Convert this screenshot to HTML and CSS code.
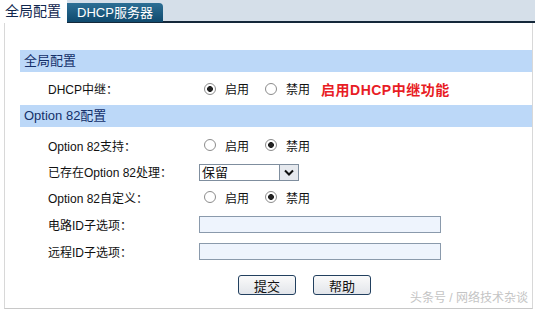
FILE: index.html
```html
<!DOCTYPE html>
<html lang="zh-CN">
<head>
    <meta charset="UTF-8" />
    <title>DHCP中继</title>
    <link rel="stylesheet" href="styles.css">
</head>
<body>
    <div class="tabs">
        <div class="tab active">全局配置</div>
        <div class="tab">DHCP服务器</div>
        <div class="tab-rest"></div>
    </div>

    <div class="panel">
        <div class="band">全局配置</div>
        <div class="row first">
            <span class="label">DHCP中继：</span>
            <div class="ctrl">
                <label class="opt"><input type="radio" name="relay" checked> 启用</label>
                <label class="opt"><input type="radio" name="relay"> 禁用</label>
                <span class="hint">启用DHCP中继功能</span>
            </div>
        </div>

        <div class="band">Option 82配置</div>
        <div class="rows">
            <div class="row">
                <span class="label">Option 82支持：</span>
                <div class="ctrl">
                    <label class="opt"><input type="radio" name="o82"> 启用</label>
                    <label class="opt"><input type="radio" name="o82" checked> 禁用</label>
                </div>
            </div>
            <div class="row">
                <span class="label">已存在Option 82处理：</span>
                <div class="ctrl">
                    <div class="select">
                        <span class="select-val">保留</span>
                        <span class="select-btn">
                            <svg width="10" height="7" viewBox="0 0 10 7"><path d="M1 1.5 L5 5.5 L9 1.5" fill="none" stroke="#111" stroke-width="2"/></svg>
                        </span>
                    </div>
                </div>
            </div>
            <div class="row">
                <span class="label">Option 82自定义：</span>
                <div class="ctrl">
                    <label class="opt"><input type="radio" name="custom"> 启用</label>
                    <label class="opt"><input type="radio" name="custom" checked> 禁用</label>
                </div>
            </div>
            <div class="row tall">
                <span class="label">电路ID子选项：</span>
                <div class="ctrl"><input type="text" class="text"></div>
            </div>
            <div class="row">
                <span class="label">远程ID子选项：</span>
                <div class="ctrl"><input type="text" class="text"></div>
            </div>
        </div>

        <div class="actions">
            <button type="button">提交</button>
            <button type="button">帮助</button>
        </div>
        <div class="mark">头条号 / 网络技术杂谈</div>
    </div>
</body>
</html>
```

FILE: styles.css
```css
body {
    margin: 0;
    width: 535px;
    height: 309px;
    overflow: hidden;
    background: #fff;
    font-family: "Liberation Sans", "Noto Sans CJK SC", sans-serif;
    font-size: 12px;
    color: #111;
}
.tabs {
    display: flex;
    height: 23px;
    background: #d5dfe9;
}
.tab {
    margin-top: 3px;
    width: 96px;
    height: 19px;
    line-height: 19px;
    text-align: center;
    color: #fff;
    font-size: 13px;
    background: linear-gradient(#2d6f95, #0f4a6e);
    border-radius: 0 4px 0 0;
    border-bottom: 1px solid #14283a;
}
.tab.active {
    margin-top: 0;
    width: 66px;
    height: 23px;
    line-height: 22px;
    color: #10264e;
    font-size: 14px;
    background: #fff;
    border: none;
    border-radius: 0;
    padding-right: 1px;
}
.tab-rest {
    flex: 1;
    border-bottom: 2px solid #14283a;
    height: 21px;
}
.panel {
    position: relative;
    box-sizing: border-box;
    height: 286px;
    margin: 0 2px 0 4px;
    border-left: 1px solid #d8d8d8;
    border-right: 1px solid #d8d8d8;
    border-bottom: 1px solid #c8c8c8;
    padding: 27px 0 0 15px;
}
.band {
    height: 22px;
    line-height: 22px;
    background: #bcd8f8;
    color: #14306a;
    font-size: 13px;
    padding-left: 4px;
}
.row {
    display: flex;
    align-items: center;
    height: 26px;
}
.row.first {
    height: 33px;
}
.row.tall {
    height: 28px;
}
.rows {
    padding-top: 5px;
}
.label {
    width: 151px;
    padding-left: 28px;
}
.ctrl {
    display: flex;
    align-items: center;
}
.opt {
    display: flex;
    align-items: center;
    margin-right: 11px;
}
.opt input {
    appearance: none;
    width: 12px;
    height: 12px;
    margin: 0 9px 0 5px;
    border: 1px solid #8c8c8c;
    border-radius: 50%;
    background: #fff;
}
.opt input:checked {
    background: radial-gradient(circle, #222 0 2.6px, #fff 3.2px);
}
.hint {
    color: #e81c24;
    font-size: 14px;
    font-weight: bold;
    letter-spacing: 0.5px;
}
.select {
    display: flex;
    width: 98px;
    height: 15px;
    border: 1px solid #7f8e9e;
    margin-top: 2px;
}
.select-val {
    flex: 1;
    font-size: 13px;
    line-height: 15px;
    padding-left: 2px;
}
.select-btn {
    width: 18px;
    border-left: 1px solid #7f8e9e;
    background: #e6e9ee;
    display: flex;
    align-items: center;
    justify-content: center;
}
.text {
    width: 242px;
    height: 17px;
    box-sizing: border-box;
    border: 1px solid #8a9aac;
    background: #eef4fd;
    padding: 0;
    margin: 0;
}
.actions {
    display: flex;
    gap: 17px;
    padding: 11px 0 0 218px;
}
button {
    width: 58px;
    height: 20px;
    padding: 0;
    font-family: inherit;
    font-size: 13px;
    color: #111;
    background: linear-gradient(#fafafa, #e2e5ea);
    border: 1px solid #22405f;
    border-radius: 3px;
}
.mark {
    position: absolute;
    right: 4px;
    bottom: 3px;
    color: #c4c4c4;
    font-size: 12px;
}
```
